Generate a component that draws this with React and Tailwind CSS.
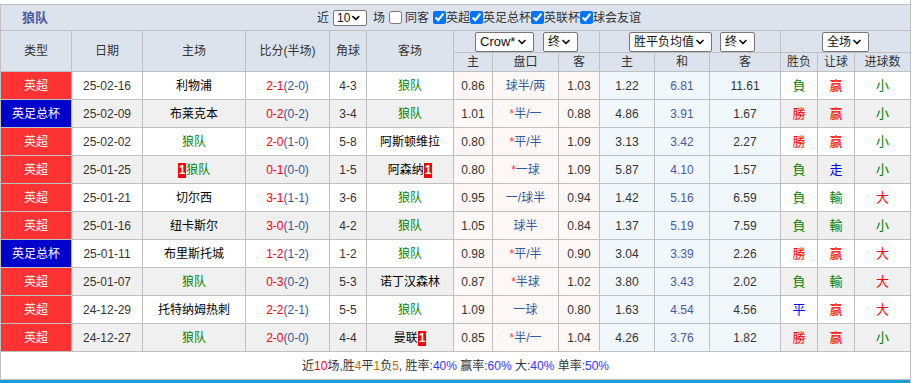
import { ChevronDown } from "lucide-react";

const rows = [
  { type: "英超", date: "25-02-16", home: "利物浦", score: "2-1", half: "(2-0)", corner: "4-3", away: "狼队", o1: "0.86", pan: "球半/两", o2: "1.03", w: "1.22", d: "6.81", l: "11.61", res: "負", rq: "赢", dx: "小" },
  { type: "英足总杯", date: "25-02-09", home: "布莱克本", score: "0-2", half: "(0-2)", corner: "3-4", away: "狼队", o1: "1.01", pan: "*半/一", o2: "0.88", w: "4.86", d: "3.91", l: "1.67", res: "勝", rq: "赢", dx: "小" },
  { type: "英超", date: "25-02-02", home: "狼队", score: "2-0", half: "(1-0)", corner: "5-8", away: "阿斯顿维拉", o1: "0.80", pan: "*平/半", o2: "1.09", w: "3.13", d: "3.42", l: "2.27", res: "勝", rq: "赢", dx: "小" },
  { type: "英超", date: "25-01-25", home: "狼队", homeRed: true, score: "0-1", half: "(0-0)", corner: "1-5", away: "阿森纳", awayRed: true, o1: "0.80", pan: "*一球", o2: "1.09", w: "5.87", d: "4.10", l: "1.57", res: "負", rq: "走", dx: "小" },
  { type: "英超", date: "25-01-21", home: "切尔西", score: "3-1", half: "(1-1)", corner: "3-6", away: "狼队", o1: "0.95", pan: "一/球半", o2: "0.94", w: "1.42", d: "5.16", l: "6.59", res: "負", rq: "輸", dx: "大" },
  { type: "英超", date: "25-01-16", home: "纽卡斯尔", score: "3-0", half: "(1-0)", corner: "4-2", away: "狼队", o1: "1.05", pan: "球半", o2: "0.84", w: "1.37", d: "5.19", l: "7.59", res: "負", rq: "輸", dx: "小" },
  { type: "英足总杯", date: "25-01-11", home: "布里斯托城", score: "1-2", half: "(1-2)", corner: "1-2", away: "狼队", o1: "0.98", pan: "*平/半", o2: "0.90", w: "3.04", d: "3.39", l: "2.26", res: "勝", rq: "赢", dx: "大" },
  { type: "英超", date: "25-01-07", home: "狼队", score: "0-3", half: "(0-2)", corner: "5-3", away: "诺丁汉森林", o1: "0.87", pan: "*半球", o2: "1.02", w: "3.80", d: "3.43", l: "2.02", res: "負", rq: "輸", dx: "大" },
  { type: "英超", date: "24-12-29", home: "托特纳姆热刺", score: "2-2", half: "(2-1)", corner: "5-5", away: "狼队", o1: "1.09", pan: "一球", o2: "0.80", w: "1.63", d: "4.54", l: "4.56", res: "平", rq: "赢", dx: "大" },
  { type: "英超", date: "24-12-27", home: "狼队", score: "2-0", half: "(0-0)", corner: "4-4", away: "曼联", awayRed: true, o1: "0.85", pan: "*半/一", o2: "1.04", w: "4.26", d: "3.76", l: "1.82", res: "勝", rq: "赢", dx: "小" },
];

const resultColor = {
  勝: "text-[#ff0000]",
  赢: "text-[#ff0000]",
  大: "text-[#ff0000]",
  負: "text-[#008000]",
  輸: "text-[#008000]",
  小: "text-[#008000]",
  平: "text-[#0000ff]",
  走: "text-[#0000ff]",
};

const FakeSelect = ({ label, className }) => (
  <span
    className={`inline-flex items-center justify-between rounded-[2px] border border-[#767676] bg-white text-[#111] ${className}`}
  >
    <span className="leading-none">{label}</span>
    <ChevronDown size={12} strokeWidth={3.5} className="text-[#111]" />
  </span>
);

const Box = ({ checked }) => (
  <input
    type="checkbox"
    defaultChecked={checked}
    className="m-0 h-[13px] w-[13px] accent-[#0075ff]"
  />
);

const RedCard = () => (
  <span className="inline-block bg-[#ff0000] px-px text-[12px] leading-[15px] font-bold text-white">
    1
  </span>
);

const TeamName = ({ name }) =>
  name === "狼队" ? (
    <span className="text-[#008000]">{name}</span>
  ) : (
    <span className="text-black">{name}</span>
  );

const th = "border border-[#c0c0c0] bg-[#dce3ed] font-normal text-[#333]";
const td = "border border-[#c0c0c0] text-center";

const App = () => {
  return (
    <div className="min-h-screen bg-white font-['Liberation_Sans','Noto_Sans_CJK_SC',sans-serif] text-[12px] text-[#333]">
      <div className="w-[911px] border-r border-[#c0c0c0]">
        <div className="h-[4px]" />
        <div className="flex h-[26px] items-center border-t border-l border-[#c0c0c0] bg-[#dce3ed]">
          <div className="w-[316px] pl-[21px] text-[13px] font-bold text-[#4b5aa0]">
            狼队
          </div>
          <div className="flex items-center text-[12px] text-[#333]">
            <span>近</span>
            <FakeSelect
              label="10"
              className="ml-[4px] h-[16px] w-[34px] pl-[3px] pr-[4px] text-[12px]"
            />
            <span className="ml-[6px]">场</span>
            <span className="ml-[4px] flex">
              <Box />
            </span>
            <span className="ml-[3px]">同客</span>
            <span className="ml-[4px] flex">
              <Box checked />
            </span>
            <span>英超</span>
            <Box checked />
            <span>英足总杯</span>
            <Box checked />
            <span>英联杯</span>
            <Box checked />
            <span>球会友谊</span>
          </div>
        </div>

        <table className="w-[911px] table-fixed border-collapse">
          <colgroup>
            <col className="w-[71px]" />
            <col className="w-[71px]" />
            <col className="w-[103px]" />
            <col className="w-[84px]" />
            <col className="w-[37px]" />
            <col className="w-[87px]" />
            <col className="w-[39px]" />
            <col className="w-[66px]" />
            <col className="w-[41px]" />
            <col className="w-[55px]" />
            <col className="w-[55px]" />
            <col className="w-[71px]" />
            <col className="w-[37px]" />
            <col className="w-[37px]" />
            <col className="w-[56px]" />
          </colgroup>
          <thead>
            <tr className="h-[22px]">
              <th rowSpan={2} className={th}>类型</th>
              <th rowSpan={2} className={th}>日期</th>
              <th rowSpan={2} className={th}>主场</th>
              <th rowSpan={2} className={th}>比分(半场)</th>
              <th rowSpan={2} className={th}>角球</th>
              <th rowSpan={2} className={th}>客场</th>
              <th colSpan={3} className={th}>
                <div className="flex items-center justify-center gap-[9px]">
                  <FakeSelect
                    label="Crow*"
                    className="h-[20px] w-[59px] pl-[4px] pr-[5px] text-[13px]"
                  />
                  <FakeSelect
                    label="终"
                    className="h-[20px] w-[35px] pl-[4px] pr-[5px] text-[12px]"
                  />
                </div>
              </th>
              <th colSpan={3} className={th}>
                <div className="flex items-center justify-center gap-[8px] pl-[4px]">
                  <FakeSelect
                    label="胜平负均值"
                    className="h-[20px] w-[83px] pl-[4px] pr-[5px] text-[12px]"
                  />
                  <FakeSelect
                    label="终"
                    className="h-[20px] w-[35px] pl-[4px] pr-[5px] text-[12px]"
                  />
                </div>
              </th>
              <th colSpan={3} className={th}>
                <div className="flex items-center justify-center">
                  <FakeSelect
                    label="全场"
                    className="h-[20px] w-[47px] pl-[4px] pr-[5px] text-[12px]"
                  />
                </div>
              </th>
            </tr>
            <tr className="h-[18px]">
              <th className={th}>主</th>
              <th className={th}>盘口</th>
              <th className={th}>客</th>
              <th className={th}>主</th>
              <th className={th}>和</th>
              <th className={th}>客</th>
              <th className={th}>胜负</th>
              <th className={th}>让球</th>
              <th className={th}>进球数</th>
            </tr>
          </thead>
          <tbody>
            {rows.map((row, index) => {
              const stripe = index % 2 === 0 ? "bg-white" : "bg-[#f0f0f0]";
              return (
                <tr key={row.date} className="h-[28px]">
                  <td
                    className={`${td} text-white ${
                      row.type === "英超" ? "bg-[#ff3333]" : "bg-[#0000cc]"
                    }`}
                  >
                    {row.type}
                  </td>
                  <td className={`${td} ${stripe} text-[#333]`}>{row.date}</td>
                  <td className={`${td} ${stripe}`}>
                    {row.homeRed ? <RedCard /> : null}
                    <TeamName name={row.home} />
                  </td>
                  <td className={`${td} ${stripe}`}>
                    <span className="text-[#ff0000]">{row.score}</span>
                    <span className="text-[#2f5a9a]">{row.half}</span>
                  </td>
                  <td className={`${td} ${stripe} text-[#333]`}>{row.corner}</td>
                  <td className={`${td} ${stripe}`}>
                    <TeamName name={row.away} />
                    {row.awayRed ? <RedCard /> : null}
                  </td>
                  <td className={`${td} bg-[#fdf8f5] text-[#333]`}>{row.o1}</td>
                  <td className={`${td} bg-[#fdf8f5] text-[#2f5a9a]`}>
                    {row.pan.startsWith("*") ? (
                      <>
                        <span className="text-[#ff3333]">*</span>
                        {row.pan.slice(1)}
                      </>
                    ) : (
                      row.pan
                    )}
                  </td>
                  <td className={`${td} bg-[#fdf8f5] text-[#333]`}>{row.o2}</td>
                  <td className={`${td} bg-[#f0f8fc] text-[#333]`}>{row.w}</td>
                  <td className={`${td} bg-[#f0f8fc] text-[#4b5aa0]`}>{row.d}</td>
                  <td className={`${td} bg-[#f0f8fc] text-[#333]`}>{row.l}</td>
                  <td className={`${td} ${stripe} text-[13px] ${resultColor[row.res]}`}>
                    {row.res}
                  </td>
                  <td className={`${td} ${stripe} text-[13px] ${resultColor[row.rq]}`}>
                    {row.rq}
                  </td>
                  <td className={`${td} ${stripe} text-[13px] ${resultColor[row.dx]}`}>
                    {row.dx}
                  </td>
                </tr>
              );
            })}
            <tr className="h-[28px]">
              <td colSpan={15} className={`${td} bg-white text-[#333]`}>
                近<span className="text-[#ff0000]">10</span>场,胜
                <span className="text-[#cc6600]">4</span>平
                <span className="text-[#cc6600]">1</span>负
                <span className="text-[#cc6600]">5</span>, 胜率:
                <span className="text-[#3333ff]">40%</span> 赢率:
                <span className="text-[#3333ff]">60%</span> 大:
                <span className="text-[#3333ff]">40%</span> 单率:
                <span className="text-[#3333ff]">50%</span>
              </td>
            </tr>
          </tbody>
        </table>
        <div className="h-[4px] bg-[#1e9ad6]" />
      </div>
    </div>
  );
};

export default App;
